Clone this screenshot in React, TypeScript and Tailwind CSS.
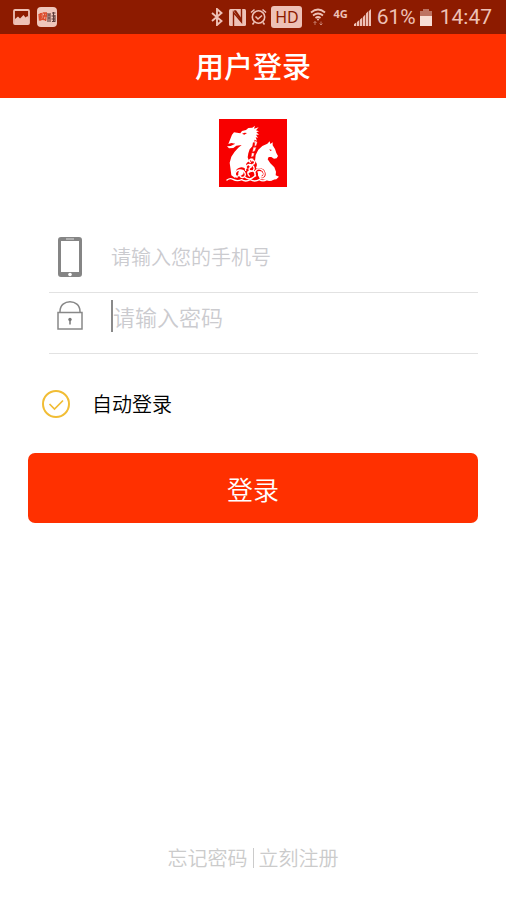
import { useState } from "react";

function StatusBar() {
  return (
    <div className="flex h-[34px] items-center bg-[#8d1b00] pl-[13px] pr-[14px] font-['Roboto',sans-serif] font-normal text-[#eec1b6]">
      <svg className="h-4 w-[17px]" viewBox="0 0 17 16">
        <rect x="1" y="1" width="15" height="14" rx="1" fill="none" stroke="currentColor" strokeWidth="1.8" />
        <path d="M2 10l3-2.500 2 2 3.500-3.500 2 2.500 2-1.500L16 10v5H1z" fill="currentColor" />
      </svg>
      <span className="ml-[7px] flex h-5 w-5 items-center justify-center rounded-sm bg-[#f0c6bb]">
        <svg className="h-3 w-[18px]" viewBox="0 0 18 12" fill="none">
          <path
            d="M1 3.5l3-1v6l-2.5.5zM2.500 2v8M1 6h3.500M5 2h4M5 5h4M5 9l2-7M8.500 2L7.500 10M5 8.500h3.500"
            stroke="#dc4b2c"
            strokeWidth="1.300"
          />
          <path
            d="M10 2v9M12 2v9M9.500 4h3M9.500 7h3M14 2h3.500M15.500 1v9M13.500 5h4M13.500 8h4M14 10.500h3.500M17 4v6"
            stroke="#5d3c3a"
            strokeWidth="1.100"
          />
        </svg>
      </span>

      <div className="ml-auto flex items-center">
        <svg className="h-[18px] w-3" viewBox="0 0 12 18" fill="none" stroke="currentColor" strokeWidth="1.900">
          <path d="M1 5l9.500 8L6 17V1l4.500 4L1 13" />
        </svg>
        <svg className="ml-1.5 h-[17px] w-[17px]" viewBox="0 0 17 17">
          <rect width="17" height="17" rx="1.500" fill="currentColor" />
          <path d="M4.500 17V3.500l8 9.500V0" fill="none" stroke="#8d1b00" strokeWidth="1.400" />
          <path d="M4.500 1.500L7 1.200l5.500 8v3.800z" fill="#8d1b00" />
        </svg>
        <svg className="ml-1 h-[18px] w-[17px]" viewBox="0 0 17 18" fill="none" stroke="currentColor" strokeWidth="1.600">
          <circle cx="8.500" cy="9" r="6.200" />
          <path d="M5.500 8.500l2.500 2.500 4-3.500M1 4.500l3.500-3M16 4.500l-3.500-3M4 14.500l-1.500 2M13 14.500l1.500 2" />
        </svg>
        <span className="ml-1 flex h-[22px] w-[31px] items-center justify-center rounded-[3px] bg-[#eec1b6] font-['Noto_Sans',sans-serif] text-[16px] leading-none text-[#8d1b00]">
          HD
        </span>
        <svg className="ml-2 h-[18px] w-4" viewBox="0 0 16 18" fill="none" stroke="currentColor" strokeWidth="1.700">
          <path d="M1 4.500Q8-1.500 15 4.500M3 7.500q5-4 10 0M5.500 10q2.500-2 5 0" />
          <circle cx="8" cy="11.500" r="1" fill="currentColor" stroke="none" />
          <path d="M5 17v-3.500M3.500 15L5 13.500 6.500 15M11 13.500V17M9.500 15.500L11 17l1.500-1.500" strokeWidth="1" opacity="0.55" />
        </svg>
        <span className="mb-2 ml-[7px] font-['Noto_Sans',sans-serif] text-[11px] font-bold leading-none">4G</span>
        <svg className="ml-1.5 h-[17px] w-[17px]" viewBox="0 0 17 17" fill="currentColor">
          <path d="M0 15l2.300-1.500V17H0zM3 13l2.300-2v6H3zM6 10.500l2.300-2V17H6zM9 8l2.300-2.500V17H9zM12 4.500L14.300 2v15H12zM15 2l2-2v17h-2z" />
        </svg>
        <span className="ml-1.5 text-[21px] leading-none">61%</span>
        <svg className="ml-1 h-[17px] w-3" viewBox="0 0 12 17">
          <path d="M3 0h6v2h3v6H0V2h3z" fill="#bd7262" />
          <path d="M0 7h12v10H0z" fill="#f8ddd5" />
        </svg>
        <span className="ml-2 text-[21px] leading-none">14:47</span>
      </div>
    </div>
  );
}

function Logo() {
  return (
    <svg className="mx-auto mt-[21px] h-[68px] w-[68px]" viewBox="0 0 204 204" role="img" aria-label="logo">
      <rect width="204" height="204" fill="#f80000" />
      {/* dragon */}
      <path
        fill="#fff"
        d="M39 47l6-7 9 1 10 2 5-7 12-3 7-6 12-1 8-6-3 9 14-4-8 9 9 3-8 3 8 7-9 0 6 9-7-1 4 10-8-3 3 10-7-2-2 12-8 9-4 12-2 12 5 13 9 12-5 20-48 16-10-7-2-16-3-22 5-18 10-15 11-12 10-8-16 2-9 7-13 1-6-6 11-1 14-7-12-2-9 3z"
      />
      <path d="M69 44l8-3 7 1-8 5z" fill="#f80000" />
      {/* mane scales */}
      <path
        fill="#fff"
        d="M108 64l7 5-2 9-7 6zM103 84l9 1-4 11-8 4zM98 101l8 1-2 10-8 3zM95 118l8 0-1 10-7 1z"
        stroke="#f80000"
        strokeWidth="1.500"
      />
      {/* horse */}
      <path
        fill="#fff"
        d="M110 142l-2-16 2-18 8-16 12-11 15-7 7-7 2 8 7-5 0 9 7 11 4 12 5 9-4 7-8 1-8-5-8 0-3 7 8 12 12 12 5 13-1 11 10 4-8 8-22 3-28-4z"
      />
      <path d="M151 91l8 2-5 3z" fill="#f80000" />
      {/* waves */}
      <g fill="none" strokeLinecap="round" strokeLinejoin="round">
        <g stroke="#f80000" strokeWidth="8">
          <path d="M54 166c-3-19 22-23 27-7 2 8-3 13-8 11M94 131c-15 2-9 17 3 17 13 0 17-15 7-18M88 176c-17-8-12-24 3-24 13 0 18 12 9 20M113 176c-12-9-8-24 8-24 17 0 19 19 8 22" />
        </g>
        <g stroke="#fff" strokeWidth="4">
          <path d="M54 175c-10-9-4-22 9-22 15 0 21 17 10 22-9 3-16-10-6-13M77 174c11 9 21 7 30-2M80 154c-3-13 8-22 18-16 11 5 9 18-1 19-9 0-9-12-1-12M91 171c-8-7-3-17 6-16 10 0 15 10 9 18M110 171c-8-13 4-25 16-20 13 5 12 22 1 23-10 0-11-13-2-14M94 130c-8-3-1-12 6-8 9 4 9 13 1 14" />
          <path d="M24 183q9-7 18-2 12 7 26 1 12 8 26 0 13 8 27 0 11 7 22 0 11 5 20-2" />
        </g>
      </g>
    </svg>
  );
}

function PhoneIcon() {
  return (
    <svg className="h-[42px] w-[26px]" viewBox="0 0 26 42">
      <path
        fillRule="evenodd"
        fill="#858585"
        d="M4 1h18q3 0 3 3v34q0 3-3 3H4q-3 0-3-3V4q0-3 3-3zM4 5v31h18V5z"
      />
      <path d="M9 3h8" stroke="#ddd" />
      <circle cx="13" cy="38.500" r="1.800" fill="#fff" />
    </svg>
  );
}

function LockIcon() {
  return (
    <svg className="h-[30px] w-[26px]" viewBox="0 0 26 30" fill="none" stroke="#888" strokeWidth="1.500">
      <rect x="1" y="11.500" width="24" height="16.500" />
      <path d="M3 11.500V10.500C3-2.500 23-2.500 23 10.500v1" />
      <circle cx="13" cy="18.500" r="1.700" fill="#777" stroke="none" />
      <path d="M13 18.500v5" stroke="#777" />
    </svg>
  );
}

export default function App() {
  const [phone, setPhone] = useState("");
  const [password, setPassword] = useState("");
  const [autoLogin, setAutoLogin] = useState(true);

  return (
    <main className="flex min-h-screen flex-col bg-white font-['Noto_Sans_CJK_SC',sans-serif] font-[350]">
      <StatusBar />
      <header className="flex h-16 items-center justify-center bg-[#ff3000] pb-0.5">
        <h1 className="text-[29px] font-medium leading-none text-white">用户登录</h1>
      </header>

      <Logo />

      <form className="mt-[34px] px-7" onSubmit={(e) => e.preventDefault()}>
        <div className="ml-[21px] flex h-[72px] items-center border-b border-[#e2e2e2] pl-2">
          <label htmlFor="phone" aria-label="手机号">
            <PhoneIcon />
          </label>
          <input
            id="phone"
            type="tel"
            className="ml-7 h-8 min-w-0 flex-1 text-[20px] outline-none placeholder:text-[#cbcbcf]"
            placeholder="请输入您的手机号"
            value={phone}
            onChange={(e) => setPhone(e.target.value)}
          />
        </div>
        <div className="ml-[21px] flex h-[61px] items-center border-b border-[#e2e2e2] pb-3.5 pl-2">
          <label htmlFor="password" aria-label="密码">
            <LockIcon />
          </label>
          <input
            id="password"
            type="password"
            className="ml-7 h-8 min-w-0 flex-1 border-l-2 border-[#8a8a8a] text-[22px] outline-none placeholder:text-[#cbcbcf]"
            placeholder="请输入密码"
            value={password}
            onChange={(e) => setPassword(e.target.value)}
          />
        </div>

        <label className="ml-3.5 mt-[34px] flex h-8 items-center text-[20px]">
          <span className="relative mr-[22px] h-7 w-7">
            <input
              type="checkbox"
              className="block h-7 w-7 appearance-none rounded-full border-2 border-[#f1bd35]"
              checked={autoLogin}
              onChange={(e) => setAutoLogin(e.target.checked)}
            />
            {autoLogin && (
              <svg
                className="pointer-events-none absolute inset-0 h-7 w-7"
                viewBox="0 0 28 28"
                fill="none"
                stroke="#f1bd35"
                strokeWidth="1.700"
              >
                <path d="M7.500 14l5 5L21 10.500" />
              </svg>
            )}
          </span>
          自动登录
        </label>

        <button
          type="submit"
          className="mt-[33px] h-[70px] w-full rounded-[7px] bg-[#ff3000] text-[26px] text-white"
        >
          登录
        </button>
      </form>

      <footer className="mt-auto flex items-center justify-center pb-[26px] text-[20px] leading-8 text-[#cbcbcb]">
        <a href="#forgot">忘记密码</a>
        <span className="mx-[5px] h-5 w-px bg-[#cbcbcb]" />
        <a href="#register">立刻注册</a>
      </footer>
    </main>
  );
}
